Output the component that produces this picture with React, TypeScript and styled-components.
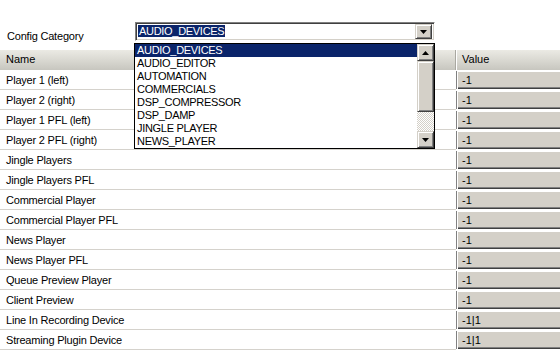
import React from 'react';
import styled, { createGlobalStyle } from 'styled-components';

const GlobalStyle = createGlobalStyle`
  html, body { margin: 0; padding: 0; background: #ffffff; }
  body {
    font-family: 'Liberation Sans', Arial, sans-serif;
    font-size: 11px;
    color: #000000;
    width: 560px;
    height: 355px;
    overflow: hidden;
  }
`;

const Page = styled.div`
  width: 560px;
  height: 355px;
  position: relative;
  background: #ffffff;
`;

const TopBar = styled.div`
  height: 50px;
  display: flex;
  align-items: flex-start;
  box-sizing: border-box;
  padding: 22px 0 0 7px;
`;

const Label = styled.span`
  width: 128px;
  padding-top: 8px;
  letter-spacing: -0.2px;
`;

const Combo = styled.div`
  position: relative;
  width: 300px;
  height: 19px;
  box-sizing: border-box;
  border-top: 1px solid #808080;
  border-left: 1px solid #808080;
  border-right: 1px solid #ffffff;
  border-bottom: 1px solid #ffffff;
  box-shadow: inset 1px 1px #404040, inset -1px -1px #d4d0c8;
  background: #ffffff;
  display: flex;
  align-items: center;
  padding: 0 2px 0 2px;
`;

const ComboText = styled.span`
  flex: 1;
  text-transform: uppercase;
  letter-spacing: -0.3px;
  font-size: 11px;
  line-height: 13px;
  span {
    background: #0a246a;
    color: #ffffff;
    padding: 0 1px;
  }
`;

const ArrowButton = styled.div<{ $h?: number }>`
  width: 17px;
  height: ${p => p.$h ?? 15}px;
  box-sizing: border-box;
  background: #d4d0c8;
  border-top: 1px solid #d4d0c8;
  border-left: 1px solid #d4d0c8;
  border-right: 1px solid #404040;
  border-bottom: 1px solid #404040;
  box-shadow: inset 1px 1px #ffffff, inset -1px -1px #808080;
  display: flex;
  align-items: center;
  justify-content: center;
  flex-shrink: 0;
`;

const DropList = styled.div`
  position: absolute;
  top: 20px;
  left: -2px;
  width: 301px;
  height: 106px;
  box-sizing: border-box;
  border: 1px solid #000000;
  background: #ffffff;
  display: flex;
  z-index: 10;
`;

const Items = styled.div`
  flex: 1;
  display: flex;
  flex-direction: column;
`;

const Item = styled.div<{ $selected?: boolean }>`
  height: 13px;
  line-height: 13px;
  padding-left: 2px;
  letter-spacing: -0.3px;
  white-space: nowrap;
  background: ${p => (p.$selected ? '#0a246a' : '#ffffff')};
  color: ${p => (p.$selected ? '#ffffff' : '#000000')};
`;

const ScrollBar = styled.div`
  width: 17px;
  display: flex;
  flex-direction: column;
  background: repeating-conic-gradient(#d4d0c8 0 25%, #ffffff 0 50%) 0 0 / 2px 2px;
`;

const Thumb = styled.div`
  height: 51px;
  box-sizing: border-box;
  background: #d4d0c8;
  border-right: 1px solid #404040;
  border-bottom: 1px solid #404040;
  border-top: 1px solid #d4d0c8;
  border-left: 1px solid #d4d0c8;
  box-shadow: inset 1px 1px #ffffff, inset -1px -1px #808080;
`;

const Track = styled.div`
  flex: 1;
`;

const Table = styled.div`
  display: grid;
  grid-template-columns: 456px 104px;
`;

const HeadCell = styled.div<{ $last?: boolean }>`
  height: 20px;
  box-sizing: border-box;
  line-height: 19px;
  padding-left: ${p => (p.$last ? 5 : 6)}px;
  background: linear-gradient(#ebeae4, #d6d5ce 60%, #c7c6bf);
  border-left: ${p => (p.$last ? '1px solid #ffffff' : 'none')};
  box-shadow: ${p => (p.$last ? 'none' : 'inset -1px 0 #a9a8a1')};
`;

const NameCell = styled.div`
  height: 20px;
  box-sizing: border-box;
  line-height: 20px;
  padding-left: 6px;
  border-bottom: 1px solid #d5d2cc;
  letter-spacing: -0.2px;
  white-space: nowrap;
`;

const ValueCell = styled.div`
  height: 20px;
  box-sizing: border-box;
  padding: 1px 0 1px 0;
`;

const ValueBox = styled.div`
  height: 18px;
  box-sizing: border-box;
  background: #d4d0c8;
  border-left: 1px solid #808080;
  box-shadow: inset 1px 1px #ffffff, inset 0 -1px #404040, inset 0 -2px #808080;
  padding-left: 5px;
  line-height: 18px;
`;

const Arrow: React.FC<{ up?: boolean }> = ({ up }) => (
  <svg width="7" height="4" viewBox="0 0 7 4">
    <polygon points={up ? '3.5,0 7,4 0,4' : '0,0 7,0 3.5,4'} fill="#000" />
  </svg>
);

const categories = [
  'AUDIO_DEVICES',
  'AUDIO_EDITOR',
  'AUTOMATION',
  'COMMERCIALS',
  'DSP_COMPRESSOR',
  'DSP_DAMP',
  'JINGLE PLAYER',
  'NEWS_PLAYER',
];

const rows: [string, string][] = [
  ['Player 1 (left)', '-1'],
  ['Player 2 (right)', '-1'],
  ['Player 1 PFL (left)', '-1'],
  ['Player 2 PFL (right)', '-1'],
  ['Jingle Players', '-1'],
  ['Jingle Players PFL', '-1'],
  ['Commercial Player', '-1'],
  ['Commercial Player PFL', '-1'],
  ['News Player', '-1'],
  ['News Player PFL', '-1'],
  ['Queue Preview Player', '-1'],
  ['Client Preview', '-1'],
  ['Line In Recording Device', '-1|1'],
  ['Streaming Plugin Device', '-1|1'],
];

const App: React.FC = () => (
  <Page>
    <GlobalStyle />
    <TopBar>
      <Label>Config Category</Label>
      <Combo>
        <ComboText>
          <span>AUDIO_DEVICES</span>
        </ComboText>
        <ArrowButton>
          <Arrow />
        </ArrowButton>
        <DropList>
          <Items>
            {categories.map((c, i) => (
              <Item key={c} $selected={i === 0}>
                {c}
              </Item>
            ))}
          </Items>
          <ScrollBar>
            <ArrowButton $h={17}>
              <Arrow up />
            </ArrowButton>
            <Thumb />
            <Track />
            <ArrowButton $h={17}>
              <Arrow />
            </ArrowButton>
          </ScrollBar>
        </DropList>
      </Combo>
    </TopBar>
    <Table>
      <HeadCell>Name</HeadCell>
      <HeadCell $last>Value</HeadCell>
      {rows.map(([name, value]) => (
        <React.Fragment key={name}>
          <NameCell>{name}</NameCell>
          <ValueCell>
            <ValueBox>{value}</ValueBox>
          </ValueCell>
        </React.Fragment>
      ))}
    </Table>
  </Page>
);

export default App;
